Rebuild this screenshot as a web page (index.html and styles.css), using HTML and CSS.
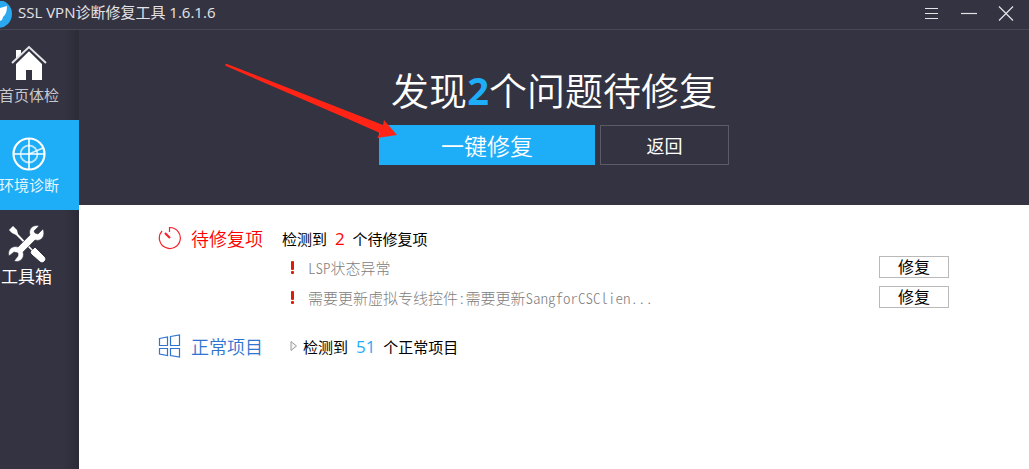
FILE: index.html
```html
<!DOCTYPE html>
<html lang="zh-CN">
<head>
    <meta charset="UTF-8">
    <meta name="viewport" content="width=device-width, initial-scale=1.0">
    <title>SSL VPN诊断修复工具</title>
    <link rel="stylesheet" href="styles.css">
</head>
<body>
    <header class="titlebar">
        <svg class="logo" width="12" height="28" viewBox="0 0 12 28" aria-hidden="true">
            <circle cx="-2" cy="13" r="14" fill="#2ba9f0"/>
            <path d="M0 7L7 5Q7 13 3 16L2 19L0 20Z" fill="#fff"/>
        </svg>
        <h1 class="app-name">SSL VPN诊断修复工具 1.6.1.6</h1>
        <div class="window-buttons">
            <button type="button" aria-label="菜单">
                <svg width="16" height="16" viewBox="0 0 16 16"><path d="M1 3.5H14M1 8.5H14M1 13.5H14"/></svg>
            </button>
            <button type="button" aria-label="最小化">
                <svg width="16" height="16" viewBox="0 0 16 16"><path d="M0 8.5H16"/></svg>
            </button>
            <button type="button" aria-label="关闭">
                <svg width="16" height="16" viewBox="0 0 16 16"><path d="M1 1.5L15 15.5M15 1.5L1 15.5"/></svg>
            </button>
        </div>
    </header>

    <div class="container">
        <nav class="sidebar">
            <a href="#" class="nav-item">
                <svg width="36" height="36" viewBox="0 0 36 36" aria-hidden="true">
                    <path d="M5 5H10V9L5 14Z" fill="#fff"/>
                    <path d="M5 19L18 6L31 19V35H21V25H15V35H5Z" fill="#fff"/>
                    <path d="M1 20L18 4L35 20" fill="none" stroke="#343341" stroke-width="3"/>
                    <path d="M1 18L18 2L35 18" fill="none" stroke="#e4e4e8" stroke-width="2"/>
                </svg>
                <span>首页体检</span>
            </a>
            <a href="#" class="nav-item active">
                <svg width="36" height="36" viewBox="0 0 36 36" fill="none" stroke="#fff" aria-hidden="true">
                    <circle cx="18" cy="19" r="15.5" stroke-width="2.2"/>
                    <circle cx="18" cy="19" r="8.5" stroke-width="1.8" opacity="0.7"/>
                    <path d="M18 4V34M3 19H33" stroke-width="1.6"/>
                    <path d="M18 19L32 13" stroke-width="1.6" opacity="0.8"/>
                </svg>
                <span>环境诊断</span>
            </a>
            <a href="#" class="nav-item tools">
                <svg width="38" height="38" viewBox="0 0 38 38" aria-hidden="true">
                    <path d="M1 5L5 1L9 5L10 9L25 25L24 26L8 10L4 8Z" fill="#fff"/>
                    <path d="M23 27L27 23L36 32Q38 34 36 36Q34 38 32 36L24 29Z" fill="#fff" stroke="#fff"/>
                    <path d="M35 4L30 9L27 8L26 6L31 1C25 -1 20 4 22 10L10 22C4 20 -1 25 1 31L6 27L10 28L10 31L6 36C12 38 17 33 15 27L27 15C33 17 38 11 35 4Z" fill="#fff" stroke="#343341" stroke-width="0.6"/>
                </svg>
                <span>工具箱</span>
            </a>
        </nav>

        <main class="main-content">
            <section class="hero">
                <h2>发现<strong>2</strong>个问题待修复</h2>
                <div class="hero-actions">
                    <button type="button" class="btn-primary">一键修复</button>
                    <button type="button" class="btn-back">返回</button>
                    <svg class="pointer-arrow" width="174" height="78" viewBox="0 0 174 78" aria-hidden="true">
                        <path d="M0 0L2 0L158 61L159 56L172 71L152 74L155 69L130 58L1 2Z" fill="#ff2415"/>
                    </svg>
                </div>
            </section>

            <section class="results">
                <div class="group">
                    <h3 class="group-title pending">
                        <svg width="24" height="24" viewBox="0 0 24 24" fill="none" stroke="#f5222d" stroke-width="1.2" aria-hidden="true">
                            <path d="M11.5 6V1.5A10.5 10.5 0 1 1 4 5"/>
                            <path d="M7 7L12 12" stroke-width="2.2"/>
                        </svg>
                        待修复项
                    </h3>
                    <div class="group-body">
                        <p class="summary"><span>检测到 <b class="count-red">2</b> 个待修复项</span></p>
                        <ul class="issues">
                            <li>
                                <span class="mark"></span>
                                <span class="issue-text">LSP状态异常</span>
                                <button type="button" class="btn-fix">修复</button>
                            </li>
                            <li>
                                <span class="mark"></span>
                                <span class="issue-text">需要更新虚拟专线控件:需要更新SangforCSClien...</span>
                                <button type="button" class="btn-fix">修复</button>
                            </li>
                        </ul>
                    </div>
                </div>

                <div class="group">
                    <h3 class="group-title normal">
                        <svg width="24" height="24" viewBox="0 0 24 24" fill="none" stroke="#2f74d0" stroke-width="1.2" aria-hidden="true">
                            <path d="M1.5 4.5L9.5 3V11.5H1.5ZM12.5 2.5L21.5 1V11.5H12.5ZM1.5 14.5H9.5V21.5L1.5 20ZM12.5 14.5H21.5V23L12.5 21.5Z"/>
                        </svg>
                        正常项目
                    </h3>
                    <details class="group-body">
                        <summary class="summary">
                            <svg width="8" height="12" viewBox="0 0 8 12" aria-hidden="true"><path d="M1 1.5L6.5 6L1 10.5Z" fill="#f4f4f4" stroke="#999"/></svg>
                            <span>检测到 <b class="count-blue">51</b> 个正常项目</span>
                        </summary>
                    </details>
                </div>
            </section>
        </main>
    </div>
</body>
</html>
```
FILE: styles.css
```css
/* Global styles */
* {
    margin: 0;
    padding: 0;
    box-sizing: border-box;
}

body {
    font-family: "Open Sans", "Noto Sans CJK SC", sans-serif;
    background-color: #fff;
    color: #000;
    min-height: 100vh;
    display: flex;
    flex-direction: column;
}

button {
    font-family: inherit;
    cursor: pointer;
}

svg {
    flex: none;
}

/* Title bar */
.titlebar {
    display: flex;
    align-items: center;
    height: 30px;
    background-color: #343341;
    border-bottom: 1px solid #484753;
    color: #e4e4e8;
}

.app-name {
    flex: 1;
    margin-left: 6px;
    padding-bottom: 6px;
    font-size: 15px;
    line-height: 22px;
    font-weight: normal;
    white-space: nowrap;
}

.window-buttons {
    display: flex;
    gap: 21px;
    padding-right: 15px;
    padding-bottom: 3px;
}

.window-buttons button {
    display: flex;
    background: none;
    border: none;
}

.window-buttons path {
    fill: none;
    stroke: #e4e4e8;
    stroke-width: 1.2;
}

.container {
    flex: 1;
    display: flex;
}

/* Sidebar */
.sidebar {
    width: 79px;
    flex: none;
    background: linear-gradient(to right, #343341 64px, #2c2b37);
}

.nav-item {
    display: flex;
    flex-direction: column;
    align-items: center;
    height: 90px;
    padding: 15px 21px 0 0;
    color: #c8c8ce;
    font-size: 15px;
    line-height: 24px;
    text-decoration: none;
    white-space: nowrap;
}

.nav-item span {
    margin-top: 2px;
}

.nav-item.active {
    background-color: #1eadf7;
    color: #e6f6ff;
}

.nav-item.tools {
    padding-right: 26px;
    color: #fff;
    font-size: 17px;
}

/* Hero */
.main-content {
    flex: 1;
    min-width: 0;
}

.hero {
    display: flex;
    flex-direction: column;
    align-items: center;
    padding: 35px 0 40px;
    background-color: #343341;
    color: #fff;
}

.hero h2 {
    margin-bottom: 10px;
    font-size: 38px;
    line-height: 50px;
    font-weight: 350;
}

.hero h2 strong {
    color: #1eadf7;
    font-family: "Noto Sans", sans-serif;
    font-weight: bold;
}

.hero-actions {
    position: relative;
    display: flex;
    gap: 5px;
}

.hero-actions button {
    height: 40px;
    color: #fff;
}

.btn-primary {
    width: 216px;
    background-color: #1eadf7;
    border: none;
    font-size: 23px;
    font-weight: 350;
}

.btn-back {
    width: 129px;
    background: none;
    border: 1px solid #5b5a66;
    font-size: 18px;
}

.pointer-arrow {
    position: absolute;
    left: -154px;
    top: -61px;
    pointer-events: none;
}

/* Results */
.results {
    padding: 19px 80px 20px 79px;
}

.group {
    display: flex;
    margin-bottom: 20px;
}

.group-title {
    display: flex;
    align-items: center;
    gap: 9px;
    width: 124px;
    height: 28px;
    font-size: 18px;
    font-weight: 350;
}

.pending {
    color: #ff0000;
}

.normal {
    color: #2f74d0;
}

.group-body {
    flex: 1;
}

.summary {
    display: flex;
    align-items: center;
    gap: 5px;
    height: 28px;
    font-size: 15px;
    white-space: pre;
}

details .summary {
    padding-left: 8px;
    list-style: none;
    cursor: pointer;
}

.summary b {
    margin: 0 4px;
    font-size: 17px;
    font-weight: normal;
}

.count-red {
    color: #ff0000;
}

.count-blue {
    color: #1eadf7;
}

.issues {
    list-style: none;
}

.issues li {
    display: flex;
    align-items: center;
    height: 30px;
    padding-left: 9px;
}

/* Exclamation mark */
.mark {
    display: flex;
    flex-direction: column;
    gap: 1px;
    width: 3px;
    margin-right: 14px;
}

.mark::before,
.mark::after {
    content: "";
    height: 9px;
    background-color: #d81e06;
    border-radius: 1px;
}

.mark::after {
    height: 3px;
}

.issue-text {
    flex: 1;
    color: #808080;
    font-family: "Noto Sans CJK SC", sans-serif;
    font-size: 15px;
    font-weight: 300;
    font-feature-settings: "hwid";
}

.btn-fix {
    width: 70px;
    height: 22px;
    background-color: #fff;
    border: 1px solid #b9b9b9;
    color: #000;
    font-size: 16px;
    line-height: 20px;
}
```
